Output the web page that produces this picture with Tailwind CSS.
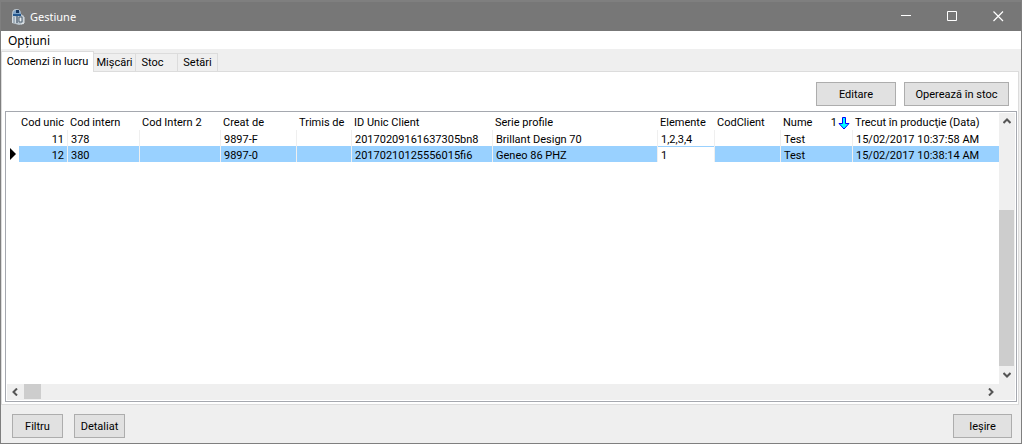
<!DOCTYPE html>
<html lang="ro">
<head>
<meta charset="utf-8">
<meta name="viewport" content="width=device-width, initial-scale=1">
<title>Gestiune</title>
<script src="https://cdn.jsdelivr.net/npm/@tailwindcss/browser@4"></script>
</head>
<body class="flex min-h-screen flex-col border border-t-2 border-[#7f7f7f] bg-[#efefef] font-[Roboto,sans-serif] text-[11px] leading-4 text-black">
  <header class="flex h-[29px] shrink-0 items-center bg-[#777777] pl-2.5 text-white">
    <svg class="h-4 w-4" viewBox="0 0 16 16" aria-hidden="true">
      <path d="M1 14V5Q1 0 5.500 0Q10 0 10 5L13 7V15L8 16L1 14Z" fill="#b9c4cd"/>
      <path d="M2 5Q2 1 6 1Q9 1 10 5Z" fill="#7fa3c7"/>
      <path d="M5 1H8V4H5Z" fill="#16365f"/>
      <path d="M2 5H10V7H2Z" fill="#24588f"/>
      <path d="M2 8V14M4 8V14" stroke="#eef2f5"/>
      <path d="M3 8V14" stroke="#718698"/>
      <path d="M6 7V14" stroke="#34475a"/>
      <path d="M8 8H11V13H8Z" stroke="#4b5d6d" fill="#e7edf1"/>
      <path d="M13 8V14L10 15" stroke="#e0e5e8" fill="none"/>
    </svg>
    <h1 class="ml-[3px] font-['Noto_Sans',sans-serif] text-[11px]">Gestiune</h1>
    <div class="ml-auto flex h-full">
      <button class="grid w-[46px] place-items-center" aria-label="Minimizare"><svg class="h-[11px] w-[11px]" viewBox="0 0 11 11"><path d="M0 4.5H10" stroke="#fff"/></svg></button>
      <button class="grid w-[46px] place-items-center" aria-label="Maximizare"><svg class="h-[11px] w-[11px]" viewBox="0 0 11 11"><path d="M.5.5H9.5V9.5H.5Z" fill="none" stroke="#fff"/></svg></button>
      <button class="grid w-[46px] place-items-center" aria-label="Închidere"><svg class="h-[11px] w-[11px]" viewBox="0 0 11 11"><path d="M.5.5L10 10M10 .5L.5 10" stroke="#fff" stroke-width="1.2"/></svg></button>
    </div>
  </header>
  <nav class="flex h-[18px] shrink-0 items-center bg-white pl-[7px]">
    <button class="pt-0.5 font-['Noto_Sans',sans-serif] text-[12px]">Opțiuni</button>
  </nav>
  <div class="flex h-[22px] shrink-0 items-end" role="tablist">
    <button role="tab" aria-selected="true" class="z-10 -mb-px h-[21px] w-[93px] border border-b-0 border-[#dcdcdc] bg-white whitespace-nowrap">Comenzi în lucru</button>
    <button role="tab" class="h-[18px] w-[42px] border-t border-r border-[#dcdcdc] pt-px">Mişcări</button>
    <button role="tab" class="h-[18px] w-[42px] border-t border-r border-[#dcdcdc] pt-px pr-2">Stoc</button>
    <button role="tab" class="h-[18px] w-10 border-t border-r border-[#dcdcdc] pt-px">Setări</button>
  </div>
  <main class="mr-0.5 flex flex-1 flex-col border border-[#dcdcdc] bg-white pr-px pb-0.5 pl-[3px]">
    <div class="flex h-[39px] shrink-0 items-start justify-end gap-2 pt-2.5 pr-2">
      <button class="h-6 w-20 border border-[#adadad] bg-[#e1e1e1] pt-0.5">Editare</button>
      <button class="h-6 w-[105px] border border-[#adadad] bg-[#e1e1e1] pt-0.5">Operează în stoc</button>
    </div>
    <section class="grid flex-1 grid-cols-[1fr_16px] grid-rows-[1fr_16px] border border-[#a5a8af] p-px">
      <div class="min-w-0 overflow-hidden">
        <table class="w-full table-fixed border-separate border-spacing-0 whitespace-nowrap">
          <colgroup>
            <col class="w-3"><col class="w-[49px]"><col class="w-[72px]"><col class="w-[81px]"><col class="w-[76px]"><col class="w-[55px]"><col class="w-[141px]"><col class="w-[165px]"><col class="w-[57px]"><col class="w-[66px]"><col class="w-[72px]"><col>
          </colgroup>
          <thead>
            <tr class="h-[17px] text-left [&>th]:p-0 [&>th]:pt-1 [&>th]:pl-0.5 [&>th]:align-top [&>th]:leading-3 [&>th]:font-normal">
              <th></th><th>Cod unic</th><th>Cod intern</th><th>Cod Intern 2</th><th>Creat de</th><th>Trimis de</th><th>ID Unic Client</th><th>Serie profile</th><th>Elemente</th><th>CodClient</th>
              <th><div class="flex h-3 items-center justify-between pr-[3px]"><span>Nume</span><span class="flex items-center gap-px">1<svg class="h-[13px] w-[12px]" viewBox="0 0 12 13" aria-hidden="true"><path d="M4.500.5H7.500V6.5H11L6 12L1 6.5H4.500Z" fill="#00ffff" stroke="#0000ff"/></svg></span></div></th>
              <th>Trecut în producţie (Data)</th>
            </tr>
          </thead>
          <tbody class="leading-3 [&_td]:border-r [&_td]:border-[#efefef] [&_td]:p-0 [&_td]:pt-1 [&_td]:pl-[3px] [&_td:first-child]:border-0 [&_td:first-child]:pt-0 [&_td:last-child]:border-0 [&_td:nth-child(2)]:pr-[3px] [&_td:nth-child(2)]:text-right">
            <tr class="h-4"><td></td><td>11</td><td>378</td><td></td><td>9897-F</td><td></td><td>20170209161637305bn8</td><td>Brillant Design 70</td><td>1,2,3,4</td><td></td><td>Test</td><td>15/02/2017 10:37:58 AM</td></tr>
            <tr class="h-4 bg-[#99d1ff]" aria-selected="true"><td class="bg-white"><svg class="block h-3 w-1.5" viewBox="0 0 6 12" aria-hidden="true"><path d="M0 0L6 6L0 12Z"/></svg></td><td>12</td><td>380</td><td></td><td>9897-0</td><td></td><td>20170210125556015fi6</td><td>Geneo 86 PHZ</td><td class="bg-white shadow-[inset_0_1px_0_#99d1ff]">1</td><td></td><td>Test</td><td>15/02/2017 10:38:14 AM</td></tr>
          </tbody>
        </table>
      </div>
      <div class="flex flex-col items-center bg-[#efefef]">
        <button class="grid h-4 w-4 place-items-center" aria-label="Sus"><svg class="h-2 w-2" viewBox="0 0 8 8"><path d="M.5 6L4 2.5L7.5 6" fill="none" stroke="#555" stroke-width="2"/></svg></button>
        <div class="flex w-full flex-1 flex-col justify-end"><div class="mr-px h-[66%] bg-[#cdcdcd]"></div></div>
        <button class="grid h-[18px] w-4 place-items-center" aria-label="Jos"><svg class="h-2 w-2" viewBox="0 0 8 8"><path d="M.5 2L4 5.5L7.5 2" fill="none" stroke="#555" stroke-width="2"/></svg></button>
      </div>
      <div class="flex items-start bg-[#efefef]">
        <button class="grid h-[15px] w-4 place-items-center" aria-label="Stânga"><svg class="h-2 w-2" viewBox="0 0 8 8"><path d="M6 .5L2.5 4L6 7.5" fill="none" stroke="#555" stroke-width="2"/></svg></button>
        <div class="ml-px h-[15px] w-[17px] bg-[#cdcdcd]"></div>
        <button class="ml-auto grid h-[15px] w-4 place-items-center" aria-label="Dreapta"><svg class="h-2 w-2" viewBox="0 0 8 8"><path d="M2 .5L5.5 4L2 7.5" fill="none" stroke="#555" stroke-width="2"/></svg></button>
      </div>
      <div class="bg-[#efefef]"></div>
    </section>
  </main>
  <footer class="flex h-[38px] shrink-0 items-center gap-[11px] pt-1 pr-[9px] pl-[11px]">
    <button class="h-6 w-[51px] border border-[#adadad] bg-[#e1e1e1] pt-0.5">Filtru</button>
    <button class="h-6 w-[51px] border border-[#adadad] bg-[#e1e1e1] pt-0.5">Detaliat</button>
    <button class="ml-auto h-6 w-[59px] border border-[#adadad] bg-[#e1e1e1] pt-0.5">Ieşire</button>
  </footer>
</body>
</html>
